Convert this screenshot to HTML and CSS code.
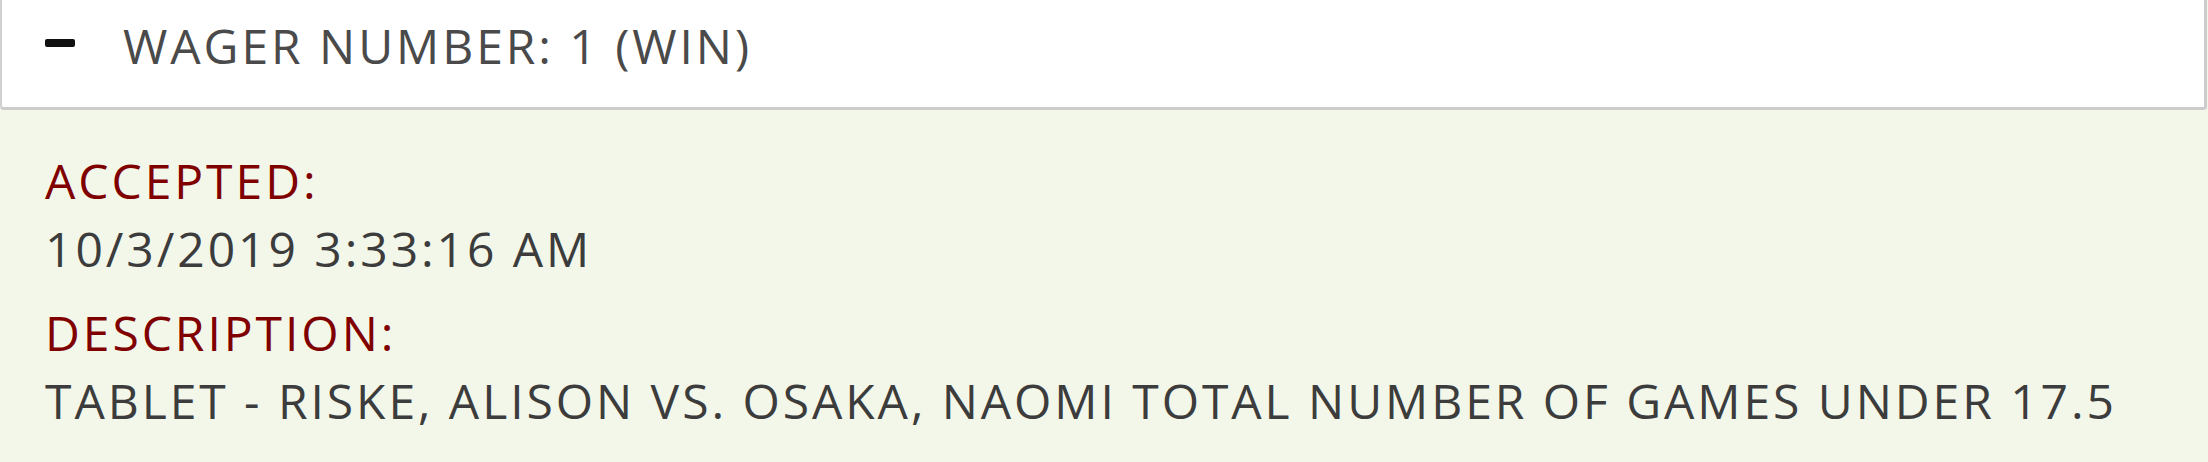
FILE: index.html
```html
<!DOCTYPE html>
<html>
<head>
<meta charset="utf-8">
<link rel="stylesheet" href="styles.css">
</head>
<body>
<div class="wager">
  <div class="wager-head">
    <span class="toggle" aria-hidden="true"></span>
    <span class="wager-title">WAGER NUMBER: 1 (WIN)</span>
  </div>
  <div class="wager-body">
    <div class="field">
      <div class="label">ACCEPTED:</div>
      <div class="value">10/3/2019 3:33:16 AM</div>
    </div>
    <div class="field">
      <div class="label">DESCRIPTION:</div>
      <div class="value">TABLET - RISKE, ALISON VS. OSAKA, NAOMI TOTAL NUMBER OF GAMES UNDER 17.5</div>
    </div>
  </div>
</div>
</body>
</html>
```
FILE: styles.css
```css
html, body {
  margin: 0;
  padding: 0;
  background: #f3f7ea;
}
body {
  font-family: "Open Sans", "Noto Sans", sans-serif;
  font-size: 48px;
  letter-spacing: 2.95px;
}
.wager {
  display: flex;
  flex-direction: column;
  min-height: 462px;
}
.wager-head {
  display: flex;
  align-items: center;
  gap: 48px;
  background: #fff;
  border-left: 2px solid #d0d0d0;
  border-right: 3px solid #cccccc;
  border-bottom: 3px solid #cccccc;
  border-radius: 0 0 4px 4px;
  margin-right: 1px;
  padding: 12px 0 27px 43px;
  height: 68px;
}
.toggle {
  width: 30px;
  height: 8px;
  background: #111;
  border-radius: 2px;
  flex: none;
  margin-top: -6px;
}
.wager-title {
  color: #4a4a4a;
  line-height: 68px;
}
.wager-body {
  flex: 1;
  padding: 37px 45px 0;
  display: flex;
  flex-direction: column;
  gap: 16px;
}
.field {
  display: flex;
  flex-direction: column;
}
.label {
  color: #800000;
  line-height: 68px;
}
.value {
  color: #3c3c3c;
  line-height: 68px;
  white-space: nowrap;
}
```
